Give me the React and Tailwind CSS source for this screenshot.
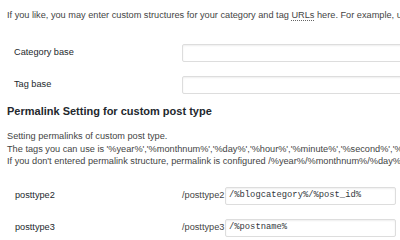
const rows = [
  { label: "posttype2", prefix: "/posttype2", value: "/%blogcategory%/%post_id%" },
  { label: "posttype3", prefix: "/posttype3", value: "/%postname%" },
];

const Field = ({ value, className = "" }) => (
  <div
    className={`h-[18px] flex items-center bg-white border border-[#dddddd] rounded-[2px] shadow-[inset_0_1px_2px_rgba(0,0,0,0.07)] ${className}`}
  >
    {value && (
      <span className="pl-[3px] text-[8.8px] text-[#32373c] whitespace-nowrap" style={{ fontFamily: '"Liberation Mono", "DejaVu Sans Mono", monospace' }}>
        {value}
      </span>
    )}
  </div>
);

export default function App() {
  return (
    <div
      className="w-[400px] h-[240px] overflow-hidden bg-white pl-[7px] pt-[8px] text-[9.2px] text-[#444444]"
      style={{ fontFamily: '"Liberation Sans", Arial, sans-serif' }}
    >
      <p className="leading-[14px] whitespace-nowrap">
        If you like, you may enter custom structures for your category and tag{" "}
        <abbr className="no-underline border-b border-dotted border-[#666]">URLs</abbr> here. For example,
        using <code>topics</code> as your category base would make your category links like
      </p>

      {/* category / tag base */}
      <div className="mt-[21px] flex items-center h-[18px]">
        <div className="w-[175px] shrink-0 pl-[7px] text-[#23282d]">Category base</div>
        <Field className="w-[240px] shrink-0" />
      </div>
      <div className="mt-[14px] flex items-center h-[18px]">
        <div className="w-[175px] shrink-0 pl-[7px] text-[#23282d]">Tag base</div>
        <Field className="w-[240px] shrink-0" />
      </div>

      <h2 className="mt-[10px] text-[11px] leading-[14px] font-bold text-[#23282d]">
        Permalink Setting for custom post type
      </h2>

      <div className="mt-[12px] leading-[12.5px] whitespace-nowrap">
        <p>Setting permalinks of custom post type.</p>
        <p>
          The tags you can use is '%year%','%monthnum%','%day%','%hour%','%minute%','%second%','%postname%','%post_id%','%author%'
        </p>
        <p>
          If you don't entered permalink structure, permalink is configured /%year%/%monthnum%/%day%/%post_id%/.
        </p>
      </div>

      <div className="mt-[19.5px] flex flex-col gap-[14px]">
        {rows.map((r) => (
          <div key={r.label} className="flex items-center h-[18px]">
            <div className="w-[175px] shrink-0 pl-[8px] text-[#23282d]">{r.label}</div>
            <span className="w-[42px] shrink-0 text-right text-[#444444]">{r.prefix}</span>
            <Field value={r.value} className="ml-[1px] w-[171px] shrink-0" />
          </div>
        ))}
      </div>
    </div>
  );
}
